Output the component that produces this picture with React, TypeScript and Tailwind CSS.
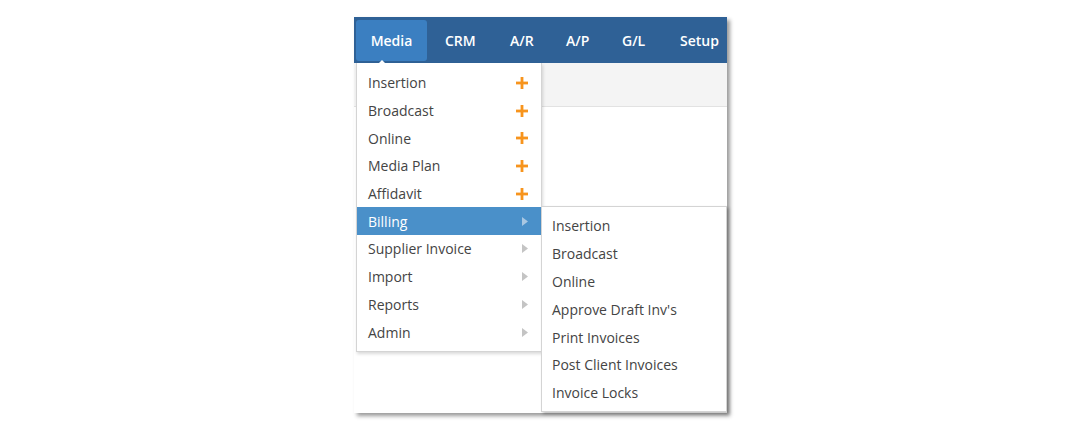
import React from 'react';

// text start offsets match the reference menu bar
const navItems = [
  { label: 'Media', w: '' },
  { label: 'CRM', w: 'w-[65px]' },
  { label: 'A/R', w: 'w-[56px]' },
  { label: 'A/P', w: 'w-[56px]' },
  { label: 'G/L', w: 'w-[58px]' },
  { label: 'Setup', w: '' },
];

const mainItems: { label: string; kind: 'add' | 'sub'; active?: boolean }[] = [
  { label: 'Insertion', kind: 'add' },
  { label: 'Broadcast', kind: 'add' },
  { label: 'Online', kind: 'add' },
  { label: 'Media Plan', kind: 'add' },
  { label: 'Affidavit', kind: 'add' },
  { label: 'Billing', kind: 'sub', active: true },
  { label: 'Supplier Invoice', kind: 'sub' },
  { label: 'Import', kind: 'sub' },
  { label: 'Reports', kind: 'sub' },
  { label: 'Admin', kind: 'sub' },
];

const billingItems = [
  'Insertion',
  'Broadcast',
  'Online',
  "Approve Draft Inv's",
  'Print Invoices',
  'Post Client Invoices',
  'Invoice Locks',
];

function PlusIcon() {
  return (
    <svg width="12" height="12" viewBox="0 0 12 12">
      <rect x="4.6" y="0" width="2.8" height="12" fill="#f7941d" />
      <rect x="0" y="4.6" width="12" height="2.8" fill="#f7941d" />
    </svg>
  );
}

function Caret({ color }: { color: string }) {
  return (
    <svg width="6" height="9" viewBox="0 0 6 9">
      <path d="M0 0 L6 4.5 L0 9 Z" fill={color} />
    </svg>
  );
}

export default function App() {
  return (
    <div className="min-h-screen bg-white font-['Open_Sans',sans-serif]">
      <div className="pt-[17px] pl-[354px]">
        <div className="relative w-[373px] h-[396px] bg-white shadow-[3px_3px_4px_rgba(0,0,0,0.4)]">
          {/* Top nav */}
          <nav className="flex items-center h-[46px] bg-[#2f6196] pl-[2px]">
            {navItems.map((item, i) =>
              i === 0 ? (
                <div
                  key={item.label}
                  className="relative h-[41px] w-[71px] mr-[18px] flex items-center justify-center rounded-[3px] bg-[#3b7fc1] text-[14px] font-semibold text-white"
                >
                  {item.label}
                  <span className="absolute left-[21px] -bottom-[4px] w-0 h-0 border-l-[5px] border-r-[5px] border-b-[5px] border-l-transparent border-r-transparent border-b-white" />
                </div>
              ) : (
                <div key={item.label} className={`h-[41px] flex items-center text-[14px] font-semibold text-white ${item.w}`}>
                  {item.label}
                </div>
              )
            )}
          </nav>

          {/* Gray toolbar band */}
          <div className="h-[44px] bg-[#f4f4f4] border-b border-[#e2e2e2]" />

          {/* Main dropdown */}
          <div className="absolute left-[2px] top-[46px] w-[186px] bg-white border border-[#d4d4d4] border-t-0 shadow-[1px_2px_3px_rgba(0,0,0,0.15)] pt-[6px] pb-[5px]">
            {mainItems.map((it) => (
              <div
                key={it.label}
                className={`flex items-center justify-between h-[27.7px] pl-[11px] pr-[13px] text-[14px] ${
                  it.active ? 'bg-[#4a90c9] text-white' : 'text-[#444]'
                }`}
              >
                <span>{it.label}</span>
                {it.kind === 'add' ? <PlusIcon /> : <Caret color={it.active ? '#a9c7e2' : '#c4c4c4'} />}
              </div>
            ))}
          </div>

          {/* Billing submenu */}
          <div className="absolute left-[187px] top-[189px] w-[186px] bg-white border border-[#d4d4d4] shadow-[2px_2px_3px_rgba(0,0,0,0.25)] pt-[5px] pb-[4px]">
            {billingItems.map((label) => (
              <div key={label} className="flex items-center h-[27.8px] pl-[10px] text-[14px] text-[#444]">
                {label}
              </div>
            ))}
          </div>
        </div>
      </div>
    </div>
  );
}
